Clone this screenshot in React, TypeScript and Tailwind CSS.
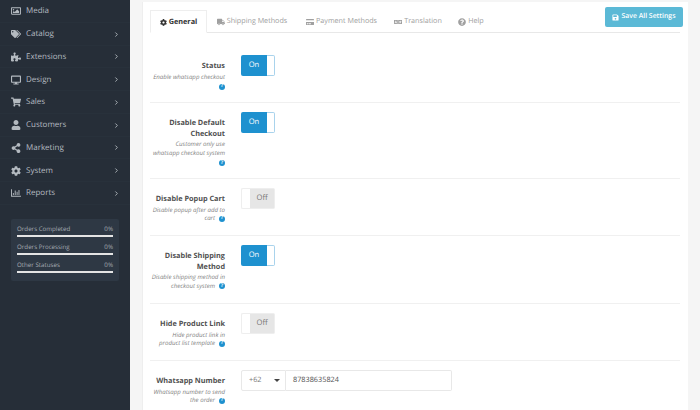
import type { ReactNode } from 'react'
import { ChevronRight } from 'lucide-react'
import { FaRegImage, FaTags, FaPuzzlePiece, FaDesktop, FaShoppingCart, FaUser, FaShareAlt, FaCog, FaRegChartBar, FaTruck, FaCreditCard, FaLanguage, FaQuestionCircle, FaSave } from 'react-icons/fa'

const menu = [
  { label: 'Media', icon: FaRegImage, arrow: false },
  { label: 'Catalog', icon: FaTags, arrow: true },
  { label: 'Extensions', icon: FaPuzzlePiece, arrow: true },
  { label: 'Design', icon: FaDesktop, arrow: true },
  { label: 'Sales', icon: FaShoppingCart, arrow: true },
  { label: 'Customers', icon: FaUser, arrow: true },
  { label: 'Marketing', icon: FaShareAlt, arrow: true },
  { label: 'System', icon: FaCog, arrow: true },
  { label: 'Reports', icon: FaRegChartBar, arrow: true },
]

const stats = ['Orders Completed', 'Orders Processing', 'Other Statuses']

const tabs = [
  { label: 'Shipping Methods', icon: FaTruck, width: 'w-[90px]' },
  { label: 'Payment Methods', icon: FaCreditCard, width: 'w-[89px]' },
  { label: 'Translation', icon: FaLanguage, width: 'w-[64px]' },
  { label: 'Help', icon: FaQuestionCircle, width: 'w-[42px]' },
]

function HelpDot() {
  return (
    <span className="inline-flex h-[6px] w-[6px] items-center justify-center rounded-full bg-[#1e91cf] align-middle text-[5px] font-bold not-italic leading-none text-white">
      ?
    </span>
  )
}

function Toggle({ on }: { on: boolean }) {
  if (on) {
    return (
      <div className="flex h-[21px] w-[34px]">
        <div className="flex w-[26px] items-center justify-center rounded-l-[2px] bg-[#1e91cf] pt-[1px] text-[7.6px] text-white">On</div>
        <div className="flex-1 rounded-r-[2px] border border-l-0 border-[#a9d3ec] bg-white" />
      </div>
    )
  }
  return (
    <div className="flex h-[21px] w-[34px]">
      <div className="w-[9px] rounded-l-[2px] border border-r-0 border-[#eeeeee] bg-white" />
      <div className="flex flex-1 items-center justify-center rounded-r-[2px] border border-l-0 border-[#eeeeee] bg-[#e6e6e6] pt-[1px] text-[7.6px] text-[#777]">Off</div>
    </div>
  )
}

function Row(props: { title: string[]; desc: string[]; dotOwnLine?: boolean; height: string; children: ReactNode; last?: boolean }) {
  return (
    <div className={`flex ${props.height} ${props.last ? '' : 'border-b border-[#f0f0f0]'} pt-[9px]`}>
      <div className="w-[75px] whitespace-nowrap pt-[6px] text-right">
        {props.title.map(t => (
          <div key={t} className="text-[7.3px] font-bold leading-[10.5px] text-[#505050]">{t}</div>
        ))}
        <div className="mt-[1px]">
          {props.desc.map((d, i) => (
            <div key={d} className="text-[6.1px] italic leading-[8.7px] text-[#808080]">
              {d}
              {i === props.desc.length - 1 && !props.dotOwnLine && <span className="ml-[4px]"><HelpDot /></span>}
            </div>
          ))}
          {props.dotOwnLine && <div className="leading-[8.7px]"><HelpDot /></div>}
        </div>
      </div>
      <div className="ml-[16px]">{props.children}</div>
    </div>
  )
}

export default function App() {
  return (
    <div className="flex h-[410px] w-[700px] overflow-hidden bg-[#f5f5f5] font-['Open_Sans',sans-serif] antialiased [text-rendering:geometricPrecision]">
      {/* Sidebar */}
      <div className="w-[130px] shrink-0 bg-[#262e38]">
        <div>
          {menu.map(item => {
            const Icon = item.icon
            return (
              <div key={item.label} className="flex h-[22.75px] items-center border-b border-[#28313b] pl-[11px] pr-[10px] pt-[1px] text-[#b4bac0]">
                <span className="flex w-[10px] justify-center"><Icon size={10} /></span>
                <span className="ml-[5px] flex-1 text-[8px]">{item.label}</span>
                {item.arrow && <ChevronRight size={7} strokeWidth={3} />}
              </div>
            )
          })}
        </div>
        <div className="mx-[11px] mt-[14px] h-[62px] rounded-[2px] bg-[#2e3844] px-[6px] pt-[5px]">
          {stats.map(s => (
            <div key={s} className="mb-[5px]">
              <div className="flex justify-between text-[6.2px] leading-[9px] text-[#a5abb2]">
                <span>{s}</span>
                <span>0%</span>
              </div>
              <div className="mt-[2px] h-[2px] bg-[#e4e4e4]" />
            </div>
          ))}
        </div>
      </div>

      {/* Main panel */}
      <div className="mx-[12px] mt-[2px] flex-1 border-l border-[#eeeeee] bg-white pl-[7px] pr-[8px] pt-[8px]">
        <div className="relative flex h-[23px] border-b border-[#e8e8e8]">
          <div className="flex h-[23px] w-[57px] items-center justify-center gap-[2px] border border-[#eeeeee] border-b-white bg-white pt-[1px] text-[7.3px] font-bold text-[#333]">
            <FaCog size={7} />
            General
          </div>
          {tabs.map(t => {
            const Icon = t.icon
            return (
              <div key={t.label} className={`flex ${t.width} items-center justify-center gap-[2px] pt-[1px] text-[7.2px] text-[#a0a0a0]`}>
                <Icon size={8} />
                {t.label}
              </div>
            )
          })}
          <div className="absolute right-[-3px] top-[-3px] flex h-[20px] w-[78px] items-center justify-center gap-[2px] rounded-[2px] bg-[#5bb9d6] pt-[1px] text-[6.9px] font-semibold text-white">
            <FaSave size={7} />
            Save All Settings
          </div>
        </div>

        <Row title={['Status']} desc={['Enable whatsapp checkout']} dotOwnLine height="h-[70px] pt-[22px]">
          <Toggle on />
        </Row>
        <Row title={['Disable Default', 'Checkout']} desc={['Customer only use', 'whatsapp checkout system']} dotOwnLine height="h-[76px]">
          <Toggle on />
        </Row>
        <Row title={['Disable Popup Cart']} desc={['Disable popup after add to', 'cart']} height="h-[57px]">
          <Toggle on={false} />
        </Row>
        <Row title={['Disable Shipping', 'Method']} desc={['Disable shipping method in', 'checkout system']} height="h-[68px]">
          <Toggle on />
        </Row>
        <Row title={['Hide Product Link']} desc={['Hide product link in', 'product list template']} height="h-[57px]">
          <Toggle on={false} />
        </Row>
        <Row title={['Whatsapp Number']} desc={['Whatsapp number to send', 'the order']} height="h-[49px]" last>
          <div className="flex h-[21px]">
            <div className="flex w-[45px] items-center justify-between rounded-l-[2px] border border-[#e8e8e8] pl-[7px] pr-[5px] text-[7.3px] text-[#777]">
              +62
              <span className="h-0 w-0 border-x-[3px] border-t-[3px] border-x-transparent border-t-[#444]" />
            </div>
            <div className="flex w-[166px] items-center rounded-r-[2px] border border-l-0 border-[#e8e8e8] pl-[7px] text-[7.3px] text-[#555]">87838635824</div>
          </div>
        </Row>
      </div>
    </div>
  )
}
